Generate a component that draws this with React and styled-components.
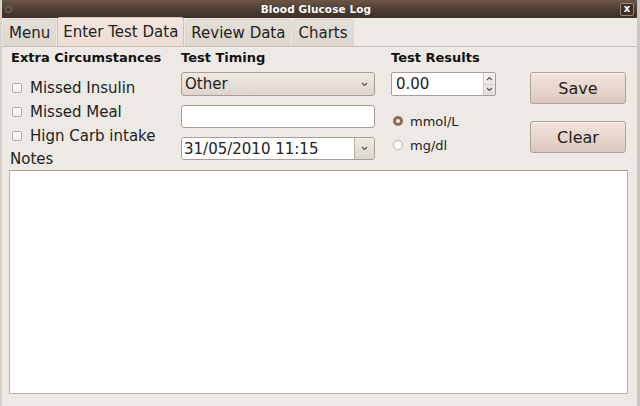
import React from 'react'
import styled, { createGlobalStyle } from 'styled-components'

// ---------------------------------------------------------------------------------------------------------------------
// Global
// ---------------------------------------------------------------------------------------------------------------------
const GlobalStyle = createGlobalStyle`
  html, body {
    margin: 0;
    padding: 0;
    background: #edeae5;
  }
  * { box-sizing: border-box; }
  body {
    font-family: "DejaVu Sans", "Liberation Sans", sans-serif;
    color: #1c1c1c;
  }
`

// ---------------------------------------------------------------------------------------------------------------------
// Styled Components
// ---------------------------------------------------------------------------------------------------------------------
const Window = styled.div`
  width: 640px;
  height: 406px;
  display: flex;
  flex-direction: column;
  background: #edeae5;
  border-left: 2px solid #d8d2ca;
  border-right: 3px solid #cfc8bf;
  overflow: hidden;
`

const TitleBar = styled.div`
  height: 18px;
  flex-shrink: 0;
  margin: 0 -3px 0 -2px;
  display: flex;
  align-items: center;
  justify-content: space-between;
  padding: 0 6px 0 5px;
  background: linear-gradient(#6d5646, #4a3a2f 60%, #3f3128);
  color: #fff;
`

const MenuDot = styled.span`
  width: 7px;
  height: 7px;
  border-radius: 50%;
  border: 1px solid #8a7565;
`

const Title = styled.span`
  font-weight: bold;
  font-size: 10.5px;
  letter-spacing: 0.1px;
  text-shadow: 0 0 1px rgba(0, 0, 0, 0.4);
`

const CloseButton = styled.span`
  width: 14px;
  height: 13px;
  border: 1px solid #9a8a7c;
  border-radius: 2px;
  background: #3a2e26;
  color: #fff;
  font-size: 10px;
  font-weight: bold;
  display: flex;
  align-items: center;
  justify-content: center;
  line-height: 1;
`

const TabBar = styled.div`
  height: 29px;
  flex-shrink: 0;
  display: flex;
  align-items: flex-end;
  padding-left: 1px;
  gap: 1px;
  border-bottom: 1px solid #c8c0b6;
`

const Tab = styled.div`
  height: ${p => (p.$active ? '29px' : '27px')};
  padding: 0 5px;
  display: flex;
  align-items: center;
  font-size: 15px;
  color: #222;
  border: 1px solid ${p => (p.$active ? '#d4c1b5' : '#dcd6ce')};
  border-bottom: none;
  border-radius: 3px 3px 0 0;
  background: ${p => (p.$active ? 'linear-gradient(#f2e6df, #ecddd4)' : 'linear-gradient(#e4dfd8, #dcd6ce)')};
`

const Panel = styled.div`
  flex: 1;
  display: flex;
  flex-direction: column;
  padding: 0 7px 12px 7px;
`

const FormRow = styled.div`
  height: 122px;
  display: flex;
`

const Column = styled.div`
  display: flex;
  flex-direction: column;
  width: ${p => p.$width}px;
  margin-left: ${p => p.$left || 0}px;
  flex-shrink: 0;
`

const Heading = styled.div`
  margin-top: 3px;
  height: 16px;
  line-height: 16px;
  font-size: 13px;
  font-weight: bold;
  color: #111;
  margin-bottom: ${p => p.$gap}px;
`

const CheckRow = styled.label`
  height: 24px;
  display: flex;
  align-items: center;
  font-size: 15px;
  color: #222;
`

const CheckBox = styled.span`
  width: 10px;
  height: 10px;
  margin: 0 8px 0 1px;
  border: 1px solid #b5aca2;
  border-radius: 2px;
  background: linear-gradient(#fff, #f1eeea);
`

const NotesLabel = styled.div`
  margin-top: 3px;
  margin-left: -1px;
  height: 16px;
  line-height: 16px;
  font-size: 15px;
  color: #222;
`

const Combo = styled.div`
  height: ${p => p.$height || 24}px;
  display: flex;
  align-items: stretch;
  border: 1px solid #a89e93;
  border-radius: 3px;
  background: ${p => (p.$button ? 'linear-gradient(#efe9e4, #ddd5ce)' : '#fff')};
  margin-bottom: ${p => p.$gap || 0}px;
  overflow: hidden;
`

const ComboText = styled.div`
  flex: 1;
  display: flex;
  align-items: center;
  padding-left: ${p => p.$pad || 3}px;
  font-size: 15px;
  color: #222;
  background: ${p => (p.$white ? '#fff' : 'transparent')};
`

const ComboArrow = styled.div`
  width: ${p => p.$width || 20}px;
  display: flex;
  align-items: center;
  justify-content: center;
  border-left: ${p => (p.$split ? '1px solid #b8afa5' : 'none')};
  background: ${p => (p.$split ? 'linear-gradient(#efe9e4, #ddd5ce)' : 'transparent')};
`

const SpinBox = styled.div`
  width: 105px;
  height: 24px;
  display: flex;
  border: 1px solid #a89e93;
  border-radius: 2px;
  background: #fff;
  margin-bottom: 13px;
`

const SpinText = styled.div`
  flex: 1;
  display: flex;
  align-items: center;
  padding-left: 4px;
  font-size: 15px;
  color: #222;
`

const SpinButtons = styled.div`
  width: 12px;
  display: flex;
  flex-direction: column;
  border-left: 1px solid #cfc8c0;
  background: linear-gradient(#f4f1ed, #e4ded8);
`

const SpinHalf = styled.div`
  flex: 1;
  display: flex;
  align-items: center;
  justify-content: center;
  border-top: ${p => (p.$lower ? '1px solid #d6cfc7' : 'none')};
`

const RadioRow = styled.label`
  height: 24px;
  display: flex;
  align-items: center;
  font-size: 13px;
  color: #222;
`

const Radio = styled.span`
  width: 10px;
  height: 10px;
  margin: 0 7px 0 2px;
  border-radius: 50%;
  border: ${p => (p.$checked ? '3px solid #8b6a57' : '1px solid #bdb4aa')};
  background: ${p => (p.$checked ? '#f4ece7' : '#fff')};
`

const Button = styled.div`
  height: 32px;
  display: flex;
  align-items: center;
  justify-content: center;
  font-size: 16px;
  color: #222;
  border: 1px solid #b0a296;
  border-radius: 3px;
  background: linear-gradient(#f1e4dd, #e8d6cc 50%, #dcc8bd);
  box-shadow: inset 0 1px 0 rgba(255, 255, 255, 0.6);
  margin-bottom: ${p => p.$gap || 0}px;
`

const NotesArea = styled.div`
  flex: 1;
  margin: 1px 2px 0 0;
  background: #fff;
  border: 1px solid #b8afa5;
  border-top-color: #a69c91;
`

// ---------------------------------------------------------------------------------------------------------------------
// Icons
// ---------------------------------------------------------------------------------------------------------------------
const Chevron = ({ up }) => (
  <svg width="7" height="5" viewBox="0 0 7 5">
    <path
      d={up ? 'M1 4 L3.5 1.5 L6 4' : 'M1 1 L3.5 3.5 L6 1'}
      fill="none"
      stroke="#5a534c"
      strokeWidth="1.1"
    />
  </svg>
)

// ---------------------------------------------------------------------------------------------------------------------
// Component
// ---------------------------------------------------------------------------------------------------------------------
const tabs = ['Menu', 'Enter Test Data', 'Review Data', 'Charts']

const App = () => {
  return (
    <>
      <GlobalStyle />
      <Window>
        <TitleBar>
          <MenuDot />
          <Title>Blood Glucose Log</Title>
          <CloseButton>x</CloseButton>
        </TitleBar>

        <TabBar>
          {tabs.map(t => (
            <Tab key={t} $active={t === 'Enter Test Data'}>{t}</Tab>
          ))}
        </TabBar>

        <Panel>
          <FormRow>
            <Column $width={170} $left={2}>
              <Heading $gap={10}>Extra Circumstances</Heading>
              <CheckRow><CheckBox />Missed Insulin</CheckRow>
              <CheckRow><CheckBox />Missed Meal</CheckRow>
              <CheckRow><CheckBox />Hign Carb intake</CheckRow>
              <NotesLabel>Notes</NotesLabel>
            </Column>

            <Column $width={194}>
              <Heading $gap={6}>Test Timing</Heading>
              <Combo $button $gap={9}>
                <ComboText $pad={3}>Other</ComboText>
                <ComboArrow $width={20}><Chevron /></ComboArrow>
              </Combo>
              <Combo $height={23} $gap={9}>
                <ComboText />
              </Combo>
              <Combo $height={23}>
                <ComboText $pad={2} $white>31/05/2010 11:15</ComboText>
                <ComboArrow $split $width={20}><Chevron /></ComboArrow>
              </Combo>
            </Column>

            <Column $width={106} $left={16}>
              <Heading $gap={6}>Test Results</Heading>
              <SpinBox>
                <SpinText>0.00</SpinText>
                <SpinButtons>
                  <SpinHalf><Chevron up /></SpinHalf>
                  <SpinHalf $lower><Chevron /></SpinHalf>
                </SpinButtons>
              </SpinBox>
              <RadioRow><Radio $checked />mmol/L</RadioRow>
              <RadioRow><Radio />mg/dl</RadioRow>
            </Column>

            <Column $width={96} $left={33}>
              <Heading $gap={6} />
              <Button $gap={17}>Save</Button>
              <Button>Clear</Button>
            </Column>
          </FormRow>

          <NotesArea />
        </Panel>
      </Window>
    </>
  )
}

export default App
